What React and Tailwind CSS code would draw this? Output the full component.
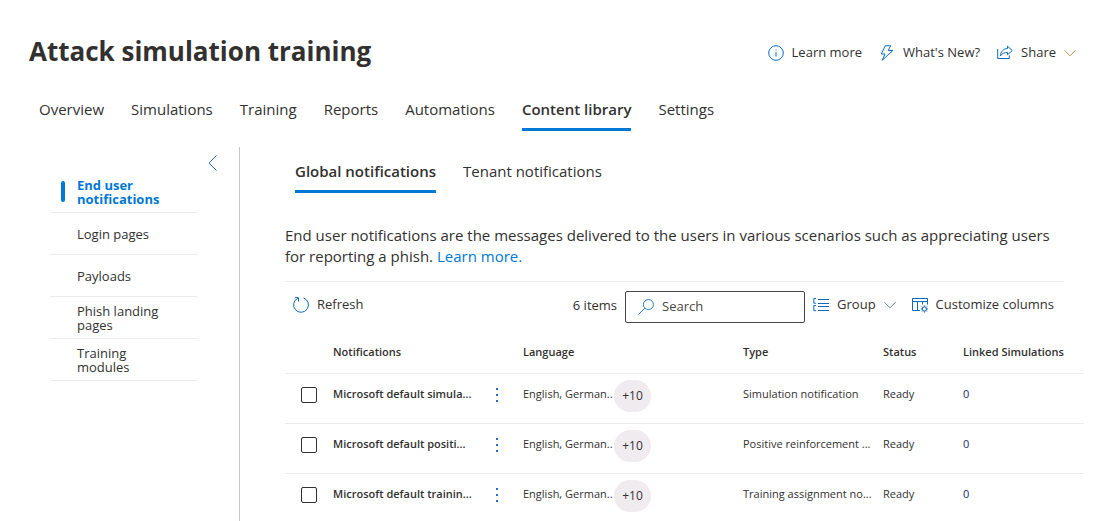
import { useState } from 'react';

const TABS = ['Overview', 'Simulations', 'Training', 'Reports', 'Automations', 'Content library', 'Settings'];

const SUB_TABS = ['Global notifications', 'Tenant notifications'];

const SIDE_ITEMS = ['End user notifications', 'Login pages', 'Payloads', 'Phish landing pages', 'Training modules'];

const ROWS = [
    { name: 'Microsoft default simula...', language: 'English, German..', more: '+10', type: 'Simulation notification', status: 'Ready', linked: 0 },
    { name: 'Microsoft default positi...', language: 'English, German..', more: '+10', type: 'Positive reinforcement ...', status: 'Ready', linked: 0 },
    { name: 'Microsoft default trainin...', language: 'English, German..', more: '+10', type: 'Training assignment no...', status: 'Ready', linked: 0 },
];

function Icon({ children, className = 'text-[#0f6cbd]' }) {
    return (
        <svg width="16" height="16" viewBox="0 0 16 16" fill="none" stroke="currentColor" aria-hidden="true" className={`shrink-0 ${className}`}>
            {children}
        </svg>
    );
}

const InfoIcon = () => (
    <Icon>
        <circle cx="8" cy="8" r="7.3" />
        <path d="M8 7v4.500M8 4.500v1" />
    </Icon>
);

const BoltIcon = () => (
    <Icon>
        <path d="M6.300.7h5.400L9.200 5.500h4.600L3.300 15.200 6 9H2.300z" strokeLinejoin="round" />
    </Icon>
);

const ShareIcon = () => (
    <Icon>
        <path d="M.7 4v9.500h11.600v-3" />
        <path d="M10.500 1.200 15.300 5.500l-4.800 4.300V7.500C7.500 7.300 5 8.500 3.300 11c.4-4.500 3.200-7.300 7.200-7.500z" strokeLinejoin="round" />
    </Icon>
);

const ChevronDown = ({ className }) => (
    <svg width="12" height="16" viewBox="0 0 12 16" fill="none" stroke="currentColor" aria-hidden="true" className={`shrink-0 ${className}`}>
        <path d="m.5 5.300 5.500 5.500 5.500-5.500" />
    </svg>
);

const RefreshIcon = () => (
    <Icon>
        <path d="M10.500.9a7.400 7.400 0 1 1-5.700.3" />
        <path d="M1.800.7h3.700v3.800" />
    </Icon>
);

const SearchIcon = () => (
    <Icon className="text-[#2b7cd3]">
        <circle cx="10.400" cy="5.600" r="5" />
        <path d="M6.800 9.200.5 15.500" />
    </Icon>
);

const GroupIcon = () => (
    <Icon>
        <path d="M5 2.500h11M5 6.500h11M5 9.500h11M5 13.500h11" />
        <path d="M3 1.500H.8v4.700H3M3 8.500H.8v5.200H3" />
    </Icon>
);

const ColumnsIcon = () => (
    <Icon>
        <path d="M8 13.500H.5v-12h15v6M.5 4.500h15M5.500 4.500v9M10.500 4.500v3" />
        <circle cx="12.400" cy="12" r="2.100" />
        <path d="M12.400 8.400v1.500M12.400 14.100v1.500M8.800 12h1.500M14.500 12H16M9.900 9.500l1 1M13.900 13.500l1 1M14.900 9.500l-1 1M10.900 13.500l-1 1" />
    </Icon>
);

function Tab({ label, active, onClick }) {
    return (
        <button
            type="button"
            role="tab"
            aria-selected={active}
            onClick={onClick}
            className={`h-11 border-b-3 pt-1 text-[15px] ${active ? 'border-[#0078d4] font-semibold' : 'border-transparent'}`}
        >
            {label}
        </button>
    );
}

function Header() {
    return (
        <header className="flex items-center justify-between pl-[29px] pr-[21px] pt-[31px]">
            <h1 className="text-[26px] leading-10 font-bold">Attack simulation training</h1>
            <div className="flex items-center gap-[17px] pt-1 text-[13px]">
                <button type="button" className="flex items-center gap-2">
                    <InfoIcon />
                    Learn more
                </button>
                <button type="button" className="flex items-center gap-2">
                    <BoltIcon />
                    What's New?
                </button>
                <button type="button" className="flex items-center gap-2">
                    <ShareIcon />
                    Share
                    <ChevronDown className="text-[#b8894f]" />
                </button>
            </div>
        </header>
    );
}

function Sidebar() {
    const [selected, setSelected] = useState('End user notifications');

    return (
        <aside className="flex w-60 shrink-0 border-r border-[#c8c6c4] pl-[50px]">
            <nav className="w-[147px] pt-6">
                {SIDE_ITEMS.map((item) => (
                    <a
                        key={item}
                        href="#"
                        onClick={() => setSelected(item)}
                        className={`flex h-[42px] items-center border-b border-[#edebe9] pl-[11px] text-[13px] leading-[14px] ${item === selected ? 'font-bold text-[#0078d4]' : ''}`}
                    >
                        <span className={`mr-3 h-[21px] w-1 shrink-0 rounded-sm ${item === selected ? 'bg-[#0078d4]' : ''}`} />
                        <span className="w-[90px]">{item}</span>
                    </a>
                ))}
            </nav>
            <button type="button" aria-label="Collapse" className="ml-[10px] mt-2 h-4 text-[#2b6cc4]">
                <svg width="12" height="16" viewBox="0 0 12 16" fill="none" stroke="currentColor">
                    <path d="M9.500.5 2 8l7.500 7.500" />
                </svg>
            </button>
        </aside>
    );
}

function Toolbar() {
    return (
        <div className="flex items-start justify-between border-t border-[#edebe9] pl-2 pr-[10px] pt-[9px] text-[13px]">
            <button type="button" className="flex h-7 items-center gap-2">
                <RefreshIcon />
                Refresh
            </button>
            <div className="flex items-start gap-2">
                <span className="leading-7">6 items</span>
                <label className="flex h-8 w-[180px] items-center gap-2 rounded-xs border border-[#484644] px-3">
                    <SearchIcon />
                    <input type="text" aria-label="Search" placeholder="Search" className="w-full min-w-0 outline-none placeholder:text-[#484644]" />
                </label>
                <button type="button" className="flex h-7 items-center gap-2">
                    <GroupIcon />
                    Group
                    <ChevronDown className="text-[#6b7f99]" />
                </button>
                <button type="button" className="ml-2 flex h-7 items-center gap-2">
                    <ColumnsIcon />
                    Customize columns
                </button>
            </div>
        </div>
    );
}

function NotificationsTable() {
    return (
        <table className="w-full table-fixed text-left text-[11px] whitespace-nowrap">
            <colgroup>
                <col className="w-12" />
                <col className="w-[150px]" />
                <col className="w-10" />
                <col className="w-[220px]" />
                <col className="w-[140px]" />
                <col className="w-20" />
                <col />
            </colgroup>
            <thead>
                <tr className="h-[42px] border-b border-[#edebe9]">
                    <td />
                    <th className="font-semibold">Notifications</th>
                    <td />
                    <th className="font-semibold">Language</th>
                    <th className="font-semibold">Type</th>
                    <th className="font-semibold">Status</th>
                    <th className="font-semibold">Linked Simulations</th>
                </tr>
            </thead>
            <tbody>
                {ROWS.map((row) => (
                    <tr key={row.name} className="h-[50px] border-b border-[#edebe9]">
                        <td className="pb-[6px] pl-4">
                            <input
                                type="checkbox"
                                aria-label={row.name}
                                className="block size-4 appearance-none rounded-xs border border-[#323130] checked:bg-[#0078d4]"
                            />
                        </td>
                        <td className="pb-2 font-semibold">{row.name}</td>
                        <td className="pb-[6px]">
                            <button type="button" aria-label="More actions" className="ml-3 flex h-4 w-4 items-center text-[#2b6cc4]">
                                <svg width="4" height="16" viewBox="0 0 4 16" fill="currentColor">
                                    <path d="M1 1h2v2H1zM1 7h2v2H1zM1 13h2v2H1z" />
                                </svg>
                            </button>
                        </td>
                        <td className="pb-1">
                            <div className="flex items-center">
                                <span className="w-[91px] pb-1">{row.language}</span>
                                <span className="flex h-8 w-[37px] items-center justify-center rounded-full bg-[#f0ebef] text-xs">{row.more}</span>
                            </div>
                        </td>
                        <td className="pb-2">{row.type}</td>
                        <td className="pb-2">{row.status}</td>
                        <td className="pb-2 text-[#1b2a6b]">{row.linked}</td>
                    </tr>
                ))}
            </tbody>
        </table>
    );
}

export default function App() {
    const [tab, setTab] = useState('Content library');
    const [subTab, setSubTab] = useState('Global notifications');

    return (
        <div className="flex h-screen flex-col overflow-hidden bg-white font-['Open_Sans','Noto_Sans',sans-serif] text-[#323130]">
            <Header />

            <div role="tablist" className="mt-4 flex gap-[27px] pl-[39px]">
                {TABS.map((label) => (
                    <Tab key={label} label={label} active={label === tab} onClick={() => setTab(label)} />
                ))}
            </div>

            <div className="mt-4 flex flex-1">
                <Sidebar />
                <main className="min-w-0 flex-1 pl-[45px] pr-[13px]">
                    <div role="tablist" className="mt-[2px] flex gap-[27px] pl-[10px]">
                        {SUB_TABS.map((label) => (
                            <Tab key={label} label={label} active={label === subTab} onClick={() => setSubTab(label)} />
                        ))}
                    </div>

                    <div className="pr-5">
                        <p className="mt-8 mb-[14px] text-[15px] leading-[21px]">
                            End user notifications are the messages delivered to the users in various scenarios such as appreciating users for reporting a phish.{' '}
                            <a href="#" className="text-[#0078d4]">Learn more.</a>
                        </p>
                        <Toolbar />
                    </div>

                    <div className="mt-2">
                        <NotificationsTable />
                    </div>
                </main>
            </div>
        </div>
    );
}
